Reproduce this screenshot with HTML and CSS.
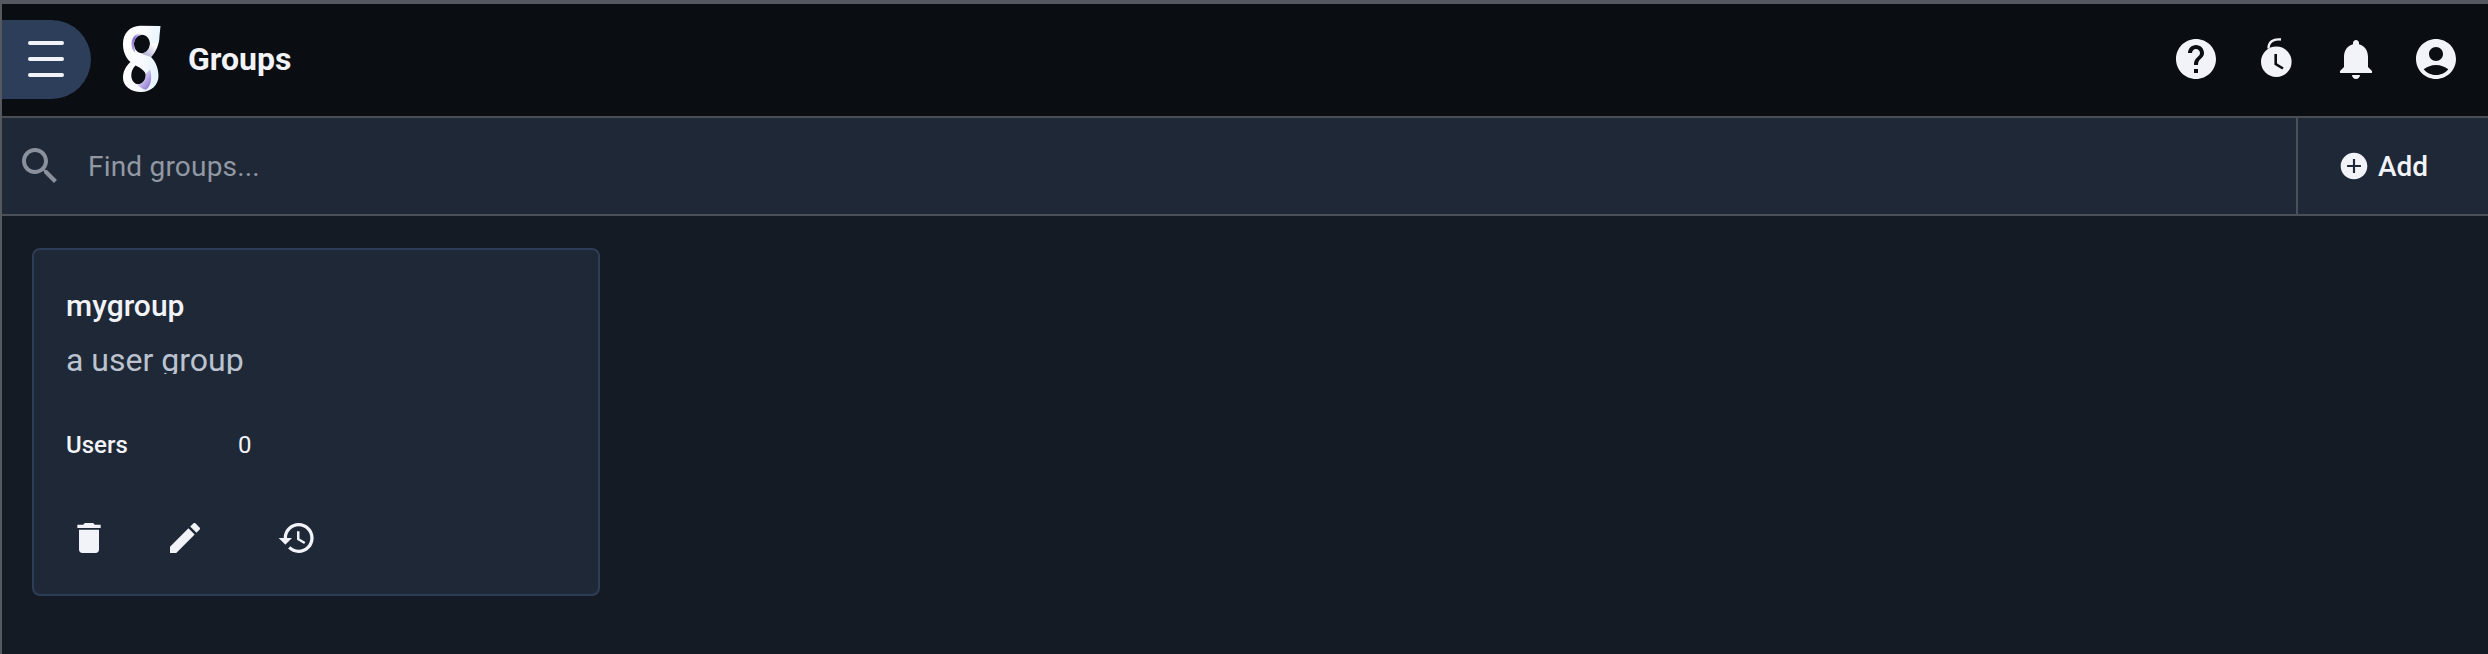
FILE: index.html
```html
<!DOCTYPE html>
<html lang="en">
<head>
<meta charset="UTF-8">
<title>Groups</title>
<link rel="stylesheet" href="styles.css">
</head>
<body>
<header class="topbar">
  <button class="menu-btn" aria-label="Menu">
    <span></span><span></span><span></span>
  </button>
  <svg class="logo" viewBox="0 0 38 68">
    <defs>
      <linearGradient id="logoFill" x1="0" y1="0" x2="1" y2="0.3">
        <stop offset="0" stop-color="#ffffff"/>
        <stop offset="0.6" stop-color="#f8faff"/>
        <stop offset="1" stop-color="#e6f4fd"/>
      </linearGradient>
      <linearGradient id="logoTop" x1="1" y1="0" x2="0" y2="1">
        <stop offset="0" stop-color="#ffffff"/>
        <stop offset="0.5" stop-color="#8468d2"/>
        <stop offset="1" stop-color="#c9bdea"/>
      </linearGradient>
      <linearGradient id="logoSide" x1="1" y1="0" x2="0" y2="1">
        <stop offset="0.2" stop-color="#ffffff"/>
        <stop offset="1" stop-color="#9f96c8"/>
      </linearGradient>
      <linearGradient id="logoBottom" x1="0" y1="0" x2="1" y2="1">
        <stop offset="0.2" stop-color="#f4f4fc"/>
        <stop offset="1" stop-color="#7d60cc"/>
      </linearGradient>
    </defs>
    <path fill="url(#logoFill)" fill-rule="evenodd" d="M17 0.700L37.500 1L36.500 11C36.500 19 33 27 28 32C33 37 35.500 44 35.500 51C35.500 60 28 67 18 67C8 67 0 61 0 53C0 46 3 41 7.500 37C3 33 0 27 0 19C0 8 7 1 17 0.700ZM19 9.700C14.600 9.700 11 13.900 11 19C11 24.100 14.600 28.300 19 28.300C23.400 28.300 27 24.100 27 19C27 13.900 23.400 9.700 19 9.700ZM12.500 40.500C9.500 43 8.300 47 8.300 50.500C8.300 55.500 11.500 59.300 15.500 59.300C19.500 59.300 22.800 55.500 22.800 50.500C22.800 46.500 18 43 12.500 40.500Z"/>
    <path fill="url(#logoTop)" d="M20 9.700C15 7 8.500 11 8.500 19C8.500 23 9.500 26 12.500 27.500C11.500 24.500 11 21.500 11 19C11 14 15 9.700 20 9.700Z"/>
    <path fill="url(#logoSide)" d="M27 17.500C27 23 24 28 18 28.300C21 30 24.500 31 28 32C31.500 28 34 23 34.500 17C32 19 29.500 18.500 27 17.500Z"/>
    <path fill="url(#logoBottom)" d="M22.800 48C23.200 54.500 19.500 60 13.500 59C16.500 62.500 20 64.500 23 64.800C28 61 29.500 53 27 44C26 46 24.500 47.500 22.800 48Z"/>
  </svg>
  <h1 class="page-title">Groups</h1>
  <nav class="topbar-icons">
    <svg class="icon-lg" viewBox="0 0 24 24"><path d="M12 2C6.48 2 2 6.48 2 12s4.48 10 10 10 10-4.48 10-10S17.52 2 12 2zm1 17h-2v-2h2v2zm2.07-7.750l-.9.92C13.450 12.900 13 13.500 13 15h-2v-.5c0-1.100.45-2.100 1.170-2.830l1.240-1.260c.37-.36.59-.86.59-1.410 0-1.100-.9-2-2-2s-2 .9-2 2H8c0-2.210 1.790-4 4-4s4 1.790 4 4c0 .88-.36 1.680-.93 2.250z"/></svg>
    <svg class="icon-lg" viewBox="0 0 48 48">
      <circle cx="24.300" cy="26.700" r="15.300"/>
      <path class="timer-loop" d="M16.500 13.500C16.500 7 21 3.500 29 4.500"/>
      <path class="timer-hands" d="M23.700 19V29L31 33.500"/>
    </svg>
    <svg class="icon-lg" viewBox="0 0 24 24"><path d="M12 22c1.100 0 2-.9 2-2h-4c0 1.100.89 2 2 2zm6-6v-5c0-3.070-1.640-5.640-4.500-6.320V4c0-.83-.67-1.500-1.500-1.500s-1.500.67-1.500 1.500v.68C7.630 5.360 6 7.920 6 11v5l-2 2v1h16v-1l-2-2z"/></svg>
    <svg class="icon-lg" viewBox="0 0 24 24"><path d="M12 2C6.480 2 2 6.480 2 12s4.480 10 10 10 10-4.480 10-10S17.520 2 12 2zm0 4c1.930 0 3.500 1.570 3.500 3.500S13.930 13 12 13s-3.500-1.570-3.500-3.500S10.070 6 12 6zm0 14c-2.030 0-4.430-.82-6.140-2.880C7.550 15.800 9.680 15 12 15s4.450.8 6.140 2.120C16.430 19.180 14.030 20 12 20z"/></svg>
  </nav>
</header>

<div class="filterbar">
  <div class="search">
    <svg class="search-icon" viewBox="0 0 24 24"><path d="M15.500 14h-.79l-.28-.27C15.410 12.590 16 11.110 16 9.500 16 5.910 13.090 3 9.500 3S3 5.910 3 9.500 5.910 16 9.500 16c1.610 0 3.090-.59 4.230-1.570l.27.28v.79l5 4.990L20.490 19l-4.990-5zm-6 0C7.010 14 5 11.990 5 9.500S7.010 5 9.500 5 14 7.010 14 9.500 11.990 14 9.500 14z"/></svg>
    <span class="search-text">Find groups...</span>
  </div>
  <button class="add-btn">
    <svg class="add-icon" viewBox="0 0 24 24"><path fill-rule="evenodd" d="M12 2C6.480 2 2 6.480 2 12s4.480 10 10 10 10-4.480 10-10S17.520 2 12 2zm.8 4.800v4.400h4.400v1.600h-4.400v4.400h-1.600v-4.400H6.800v-1.600h4.400V6.800z"/></svg>
    Add
  </button>
</div>

<main class="content">
  <section class="card">
    <h2 class="card-name">mygroup</h2>
    <p class="card-desc">a user group</p>
    <div class="card-stat">
      <span class="stat-label">Users</span>
      <span class="stat-value">0</span>
    </div>
    <div class="card-actions">
      <svg class="icon-md" viewBox="0 0 24 24"><path d="M6 19c0 1.100.9 2 2 2h8c1.100 0 2-.9 2-2V7H6v12zM19 4h-3.500l-1-1h-5l-1 1H5v2h14V4z"/></svg>
      <svg class="icon-md" viewBox="0 0 24 24"><path d="M3 17.250V21h3.750L17.810 9.940l-3.750-3.750L3 17.250zM20.710 7.040c.39-.39.39-1.020 0-1.410l-2.340-2.340c-.39-.39-1.020-.39-1.410 0l-1.830 1.830 3.750 3.750 1.830-1.830z"/></svg>
      <svg class="icon-md" viewBox="0 0 24 24"><path d="M13 3c-4.970 0-9 4.030-9 9H1l3.890 3.890.07.14L9 12H6c0-3.870 3.130-7 7-7s7 3.130 7 7-3.130 7-7 7c-1.930 0-3.680-.79-4.940-2.060l-1.420 1.420C8.270 19.990 10.510 21 13 21c4.970 0 9-4.030 9-9s-4.030-9-9-9zm-1 5v5l4.280 2.540.72-1.210-3.500-2.080V8H12z"/></svg>
    </div>
  </section>
</main>
</body>
</html>
```

FILE: styles.css
```css
* {
  box-sizing: border-box;
}
html, body {
  height: 100%;
}
body {
  margin: 0;
  background-color: #151b25;
  border-top: 4px solid #55585e;
  border-left: 2px solid #55585e;
  color: #f1f3f8;
  font-family: Roboto, "Liberation Sans", sans-serif;
  overflow: hidden;
}
svg {
  fill: #f1f3f8;
  display: block;
}

.topbar {
  height: 114px;
  background-color: #0a0d12;
  border-bottom: 2px solid #4a4d54;
  display: flex;
  align-items: center;
}
.menu-btn {
  width: 89px;
  height: 79px;
  margin-top: -2px;
  padding: 0 0 0 26px;
  border: none;
  border-radius: 0 40px 40px 0;
  background-color: #2c3e5a;
  display: flex;
  flex-direction: column;
  align-items: flex-start;
  justify-content: center;
  gap: 12px;
}
.menu-btn span {
  display: block;
  width: 36px;
  height: 4px;
  border-radius: 2px;
  background-color: #f1f3f8;
}
.logo {
  width: 38px;
  height: 68px;
  margin: -2px 0 0 32px;
}
.page-title {
  margin: -2px 0 0 27px;
  font-size: 32px;
  font-weight: 700;
}
.topbar-icons {
  margin-left: auto;
  margin-right: 28px;
  margin-top: -2px;
  display: flex;
  gap: 32px;
}
.icon-lg {
  width: 48px;
  height: 48px;
}
.timer-loop {
  fill: none;
  stroke: #f1f3f8;
  stroke-width: 2.400;
}
.timer-hands {
  fill: none;
  stroke: #0a0d12;
  stroke-width: 2.600;
}

.filterbar {
  height: 98px;
  background-color: #1e2836;
  border-bottom: 2px solid #4a4f58;
  display: flex;
}
.search {
  flex: 1;
  display: flex;
  align-items: center;
  padding-left: 14px;
}
.search-icon {
  width: 48px;
  height: 48px;
  fill: #8b919c;
}
.search-text {
  margin-left: 24px;
  font-size: 28px;
  letter-spacing: 0.2px;
  color: #9298a3;
}
.add-btn {
  width: 192px;
  border: none;
  border-left: 2px solid #4a4f58;
  background: none;
  color: #f1f3f8;
  font-family: inherit;
  font-size: 28px;
  font-weight: 500;
  display: flex;
  align-items: center;
  gap: 8px;
  padding: 0 0 0 40px;
}
.add-icon {
  width: 32px;
  height: 32px;
}

.content {
  padding: 32px 30px;
}
.card {
  width: 568px;
  height: 348px;
  padding: 38px 32px 0;
  background-color: #1e2836;
  border: 2px solid #2e3d57;
  border-radius: 8px;
}
.card-name {
  margin: 0;
  font-size: 30px;
  font-weight: 500;
  line-height: 36px;
}
.card-desc {
  margin: 16px 0 0;
  height: 34px;
  overflow: hidden;
  font-size: 32px;
  line-height: 40px;
  color: #bcc3d0;
}
.card-stat {
  margin-top: 56px;
  display: flex;
  font-size: 24px;
  line-height: 30px;
}
.stat-label {
  width: 172px;
  font-weight: 500;
}
.card-actions {
  margin-top: 58px;
  margin-left: 3px;
  display: grid;
  grid-template-columns: 96px 112px 40px;
}
.icon-md {
  width: 40px;
  height: 40px;
}
```
